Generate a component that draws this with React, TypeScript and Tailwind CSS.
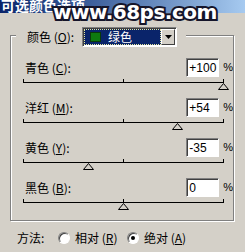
const rows = [
  { name: "青色", key: "C", value: "+100", v: 100 },
  { name: "洋红", key: "M", value: "+54", v: 54 },
  { name: "黄色", key: "Y", value: "-35", v: -35 },
  { name: "黑色", key: "B", value: "0", v: 0 },
];

function Slider({ v }: { v: number }) {
  const x = ((v + 100) / 200) * 200;
  return (
    <div className="relative ml-[12px] mt-[2px] h-[19px] w-[201px]">
      <div className="absolute left-0 top-[3px] h-px w-full bg-black" />
      <div className="absolute left-0 top-0 h-[3px] w-px bg-black" />
      <div className="absolute left-[100px] top-0 h-[3px] w-px bg-black" />
      <div className="absolute right-0 top-0 h-[3px] w-px bg-black" />
      <svg
        className="absolute top-[4px]"
        style={{ left: x - 5 }}
        width="11"
        height="7"
        viewBox="0 0 11 7"
      >
        <path d="M5.5 0.5 L10.5 6.5 L0.5 6.5 Z" fill="#d4d0c8" stroke="#000" strokeWidth="1" />
      </svg>
    </div>
  );
}

function Row({ name, k, value, v }: { name: string; k: string; value: string; v: number }) {
  return (
    <div>
      <div className="flex h-[19px] items-center pl-[14px]">
        <span className="w-[162px] leading-none">
          {name} (<u>{k}</u>):
        </span>
        <div className="flex h-[19px] w-[33px] items-center border border-t-[#808080] border-l-[#808080] border-r-white border-b-white bg-white pl-[2px] font-['Liberation_Sans',sans-serif] text-[12px] shadow-[inset_1px_1px_0_#404040]">
          {value}
        </div>
        <span className="ml-[4px] font-['Liberation_Sans',sans-serif] text-[11px]">%</span>
      </div>
      <Slider v={v} />
    </div>
  );
}

function Radio({ checked }: { checked?: boolean }) {
  return (
    <div className="flex h-[12px] w-[12px] items-center justify-center rounded-full border border-t-[#808080] border-l-[#808080] border-r-white border-b-white bg-white shadow-[inset_1px_1px_0_#404040]">
      {checked && <div className="h-[4px] w-[4px] rounded-full bg-black" />}
    </div>
  );
}

export default function App() {
  return (
    <div className="relative h-[252px] w-[245px] overflow-hidden bg-[#d4d0c8] font-['Noto_Sans_CJK_SC',sans-serif] text-[12px] text-black">
      <div className="h-[13px] overflow-hidden bg-gradient-to-r from-[#0a246a] to-[#a6caf0]">
        <div className="-mt-[4px] pl-[1px] text-[14px] font-bold leading-[18px] text-white">可选颜色选项</div>
      </div>

      {/* site watermark over the title bar */}
      <div className="absolute left-[53px] top-[1px] font-['DejaVu_Sans',sans-serif] text-[20px] font-bold leading-[22px] tracking-[-0.5px] text-white [-webkit-text-stroke:4px_#15152a] [paint-order:stroke_fill]">
        www.68ps.com
      </div>

      <div className="ml-[10px] mt-[22px] h-[186px] w-[224px] border border-[#808080] shadow-[inset_1px_1px_0_#fff,1px_1px_0_#fff]">
        <div className="-mt-[9px] ml-[5px] flex w-fit items-center bg-[#d4d0c8] pl-[11px] pr-[9px]">
          <span className="w-[55px] leading-none">
            颜色 (<u>O</u>):
          </span>
          <div className="flex h-[20px] w-[95px] border border-t-[#808080] border-l-[#808080] border-r-white border-b-white bg-white p-[1px] shadow-[inset_1px_1px_0_#404040]">
            <div className="flex flex-1 items-center border border-dotted border-[#e8e8a0] bg-[#0a246a] pl-[5px]">
              <div className="h-[10px] w-[11px] border border-[#0a3a0a] bg-[#0e7a10]" />
              <span className="ml-[7px] leading-none text-white">绿色</span>
            </div>
            <div className="flex w-[14px] items-center justify-center border border-t-white border-l-white border-r-[#404040] border-b-[#404040] bg-[#d4d0c8]">
              <svg width="7" height="4" viewBox="0 0 7 4">
                <path d="M0 0 H7 L3.5 4 Z" fill="#000" />
              </svg>
            </div>
          </div>
        </div>

        <div className="mt-[11px]">
          {rows.map((r) => (
            <Row key={r.key} name={r.name} k={r.key} value={r.value} v={r.v} />
          ))}
        </div>
      </div>

      <div className="mt-[9px] flex h-[16px] items-center pl-[17px]">
        <span className="w-[41px]">方法:</span>
        <Radio />
        <span className="ml-[5px] w-[52px]">
          相对 (<u>R</u>)
        </span>
        <Radio checked />
        <span className="ml-[5px]">
          绝对 (<u>A</u>)
        </span>
      </div>
    </div>
  );
}
